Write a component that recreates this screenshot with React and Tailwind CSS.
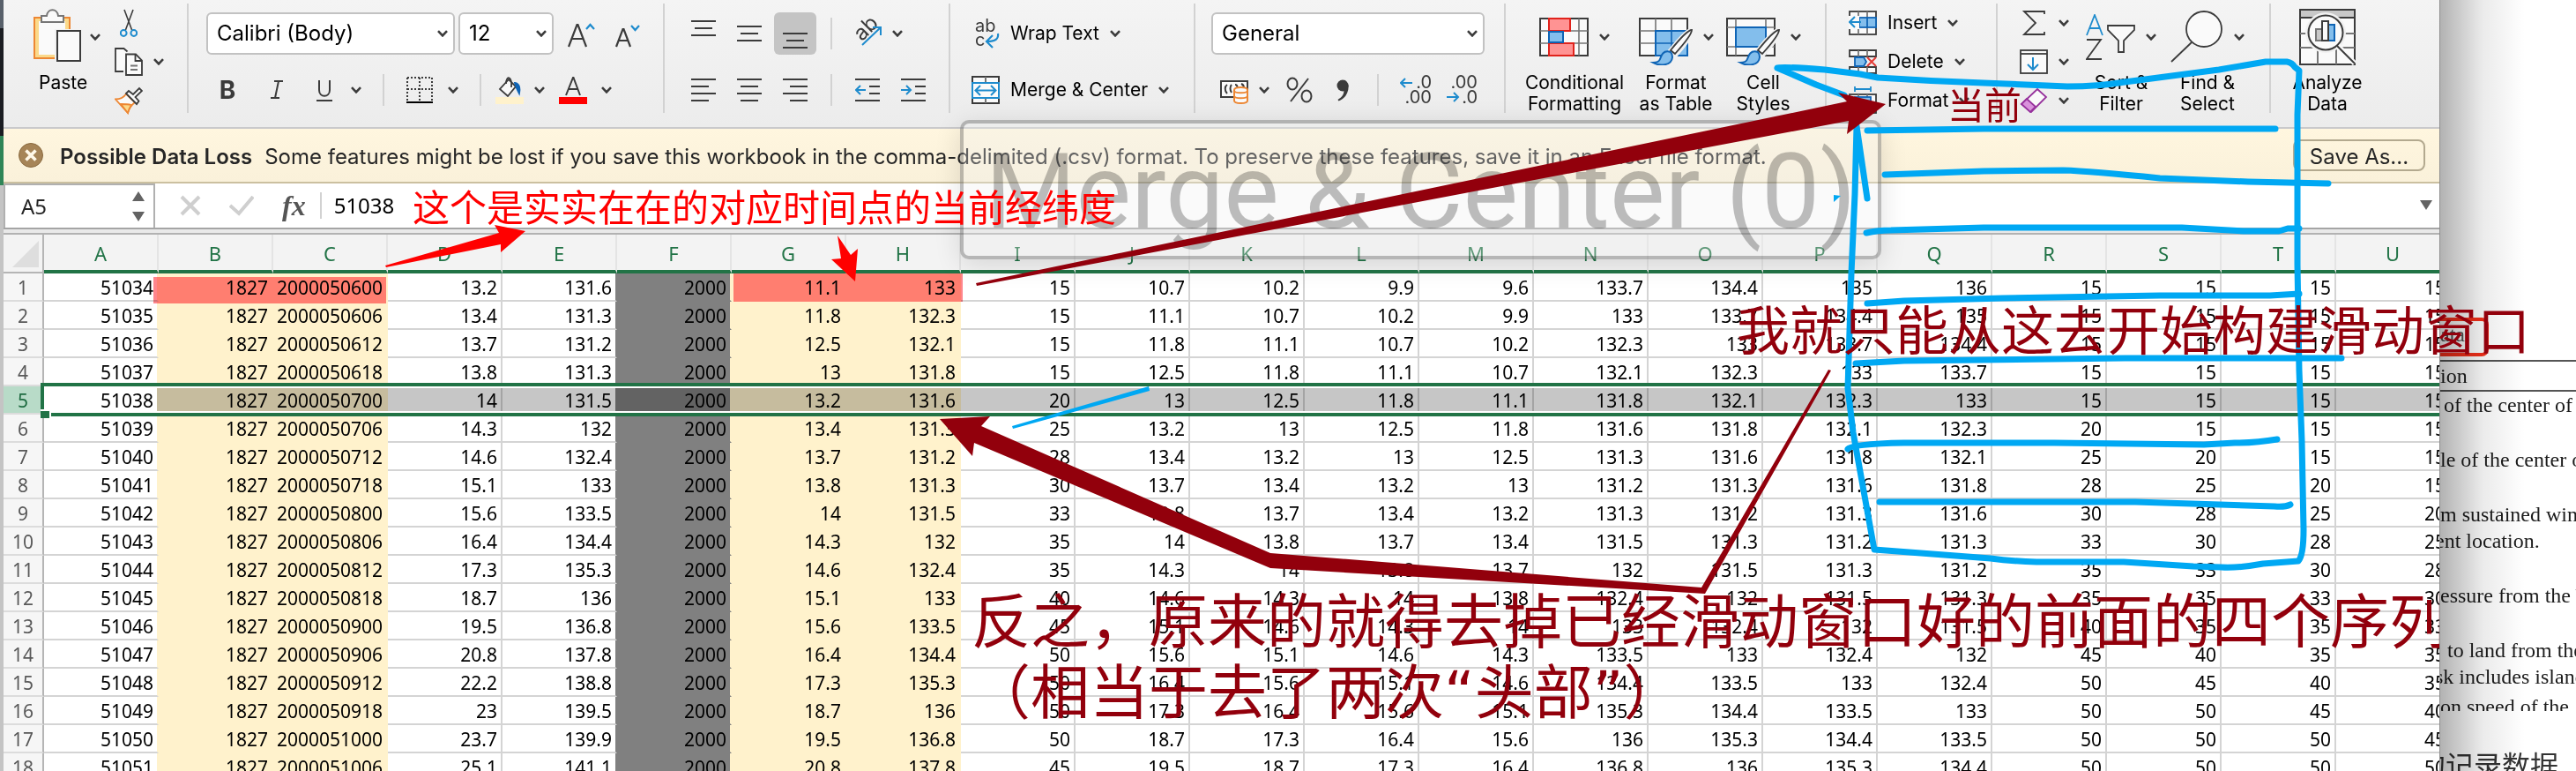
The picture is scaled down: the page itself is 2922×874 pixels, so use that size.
import React from "react";

/* ---------- sheet data ---------- */
const COLUMNS = "ABCDEFGHIJKLMNOPQRSTU".split("");
const LAT = [9.6, 9.9, 10.2, 10.7, 11.1, 11.8, 12.5, 13, 13.2, 13.4, 13.7, 13.8, 14, 14.3, 14.6, 15.1, 15.6, 16.4, 17.3, 18.7, 19.5, 20.8, 22.2, 23, 23.7, 25.1];
const LON = [136, 135, 134.4, 133.7, 133, 132.3, 132.1, 131.8, 131.6, 131.3, 131.2, 131.3, 131.5, 132, 132.4, 133, 133.5, 134.4, 135.3, 136, 136.8, 137.8, 138.8, 139.5, 139.9, 141.1];
const WIND = [15, 15, 15, 15, 15, 15, 15, 15, 20, 25, 28, 30, 33, 35, 35, 40, 45, 50, 50, 50, 50, 45];
const two = (n) => String(n).padStart(2, "0");

const ROWS = Array.from({ length: 18 }, (_, i) => {
  const hours = i * 6;
  return [
    51034 + i, 1827, `200005${two(6 + Math.floor(hours / 24))}${two(hours % 24)}`,
    LAT[i + 8], LON[i + 8], 2000, LAT[i + 4], LON[i + 4], WIND[i + 4],
    LAT[i + 3], LAT[i + 2], LAT[i + 1], LAT[i],
    LON[i + 3], LON[i + 2], LON[i + 1], LON[i],
    WIND[i + 3], WIND[i + 2], WIND[i + 1], WIND[i],
  ];
});

const plain = "border-[#d4d4d4]";
const CELL = {
  A: "border-b-[#d4d4d4] border-r-[#fff2cc]",
  B: "bg-[#fff2cc] border-[#fff2cc]",
  C: "bg-[#fff2cc] border-[#fff2cc]",
  E: "border-b-[#d4d4d4] border-r-[#808080]",
  F: "bg-[#808080] border-b-[#808080] border-r-[#fff2cc]",
  G: "bg-[#fff2cc] border-[#fff2cc]",
  H: "bg-[#fff2cc] border-[#fff2cc]",
};

/* ---------- small parts ---------- */
const Chevron = ({ className = "" }) => (
  <svg className={`h-2 w-3 shrink-0 ${className}`} viewBox="0 0 12 8" fill="none" stroke="#3b3b3b" strokeWidth="2.6">
    <path d="M1 1.2 6 6.4 11 1.2" />
  </svg>
);
const Sep = ({ className = "h-9" }) => <div className={`w-[2px] shrink-0 bg-[#d2d2d2] ${className}`} />;
const GroupSep = () => <Sep className="mt-1 h-[124px]" />;

const IconButton = ({ label, className = "", children }) => (
  <button aria-label={label} className={`flex shrink-0 items-center justify-center ${className}`}>{children}</button>
);

const lineSets = {
  top: ["M0 7h28", "M4 15h20", "M0 23h28"],
  middle: ["M0 13h28", "M4 21h20", "M0 29h28"],
  bottom: ["M0 21h28", "M4 29h20", "M0 37h28"],
  left: ["M0 9h28", "M0 17h20", "M0 25h28", "M0 33h20"],
  center: ["M0 9h28", "M4 17h20", "M0 25h28", "M4 33h20"],
  right: ["M0 9h28", "M8 17h20", "M0 25h28", "M8 33h20"],
};
const Lines = ({ kind }) => (
  <svg className="h-[42px] w-7" viewBox="0 0 28 42" stroke="#3b3b3b" strokeWidth="2">
    {lineSets[kind].map((d) => <path key={d} d={d} />)}
  </svg>
);
const Indent = ({ out }) => (
  <svg className="h-[42px] w-7" viewBox="0 0 28 42" fill="none" stroke="#3b3b3b" strokeWidth="2">
    <path d="M0 9h28M16 17h12M16 25h12M0 33h28" />
    <path d={out ? "M12 21H1M6 16 1 21 6 26" : "M0 21h11M6 16 11 21 6 26"} stroke="#1e8bcd" />
  </svg>
);

const PasteIcon = () => (
  <svg className="h-16 w-14" viewBox="0 0 56 64" fill="none" strokeWidth="2">
    <rect x="1" y="10" width="40" height="46" fill="#fbd98a" stroke="#ed8733" />
    <rect x="6" y="14" width="30" height="38" fill="#fafafa" />
    <path d="M9 15V8h6c1-9 12-9 13 0h6v7z" fill="#fafafa" stroke="#767676" />
    <rect x="24" y="23" width="31" height="39" fill="#f1f1f1" />
    <rect x="27" y="25" width="26" height="34" fill="#fafafa" stroke="#3b3b3b" />
  </svg>
);
const CutIcon = () => (
  <svg className="h-8 w-5" viewBox="0 0 20 32" fill="none" stroke="#3b3b3b" strokeWidth="1.6">
    <path d="M5 1 13.6 24M15 1 6.4 24" />
    <circle cx="4.2" cy="27.5" r="3.4" stroke="#1e8bcd" strokeWidth="2" />
    <circle cx="15.8" cy="27.5" r="3.4" stroke="#1e8bcd" strokeWidth="2" />
  </svg>
);
const CopyIcon = () => (
  <svg className="h-8 w-8" viewBox="0 0 32 32" fill="none" stroke="#3b3b3b" strokeWidth="1.8">
    <path d="M10 27H1V1h9.500l4 3.500" fill="#fafafa" />
    <path d="M13 7.500h11l7 7V31H13z" fill="#fafafa" />
    <path d="M23.500 7.500V15H31" />
    <path d="M18 20.500h8M18 25h8" stroke="#767676" />
  </svg>
);
const BrushIcon = () => (
  <svg className="h-8 w-8" viewBox="0 0 32 32" fill="none" strokeWidth="1.8">
    <path d="M1 14.500c5 0 9-1.500 12-6L23 18c-4 3-6.500 7-8 12z" fill="#fafafa" stroke="#ed8733" />
    <path d="M7 20c5 0 8 0 12 1-2 3-3 5-4 9z" fill="#fbd98a" stroke="#ed8733" />
    <path d="m13 8 3-3 5 4 7-7 3 3-7.500 7 4 4.500L25 20z" fill="#fafafa" stroke="#3b3b3b" />
  </svg>
);

const GridBase = () => (
  <>
    <rect x="1" y="1" width="54" height="42" fill="#fafafa" stroke="#3b3b3b" strokeWidth="2" />
    <path d="M1 15h54M1 29h54M19 1v42M37 1v42" stroke="#767676" strokeWidth="1.6" />
  </>
);
const PaintBrush = () => (
  <>
    <path d="M60 14C55 14 44 27 36 37l5 6C50 33 60 20 60 14z" fill="#fafafa" stroke="#f1f1f1" strokeWidth="5" />
    <path d="M60 14C55 14 44 27 36 37l5 4C50 31 60 19 60 14z" fill="#fafafa" stroke="#3b3b3b" strokeWidth="1.800" />
    <path d="M36 39c-9-3-11 5-12 8-1 3-4 4-8 4 7 4 21 4 22-6 0-3-1-5-2-6z" fill="#83beec" stroke="#0f64b5" strokeWidth="2" />
  </>
);
const ConditionalIcon = () => (
  <svg className="h-16 w-14" viewBox="0 -10 56 64" fill="none">
    <rect x="1" y="1" width="54" height="42" fill="#fafafa" stroke="#3b3b3b" strokeWidth="2" />
    <path d="M1 15h54M1 29h54M11 1v42M45 1v42" stroke="#767676" strokeWidth="1.6" />
    <path d="M11 1h24v14H11zM11 29h28v14H11z" fill="#ff9393" stroke="#e0231c" strokeWidth="2" />
    <path d="M11 16h16v12H11z" fill="#83beec" stroke="#0f64b5" strokeWidth="2" />
  </svg>
);
const FormatTableIcon = () => (
  <svg className="h-16 w-[62px]" viewBox="-1 -10 62 64" fill="none">
    <GridBase />
    <path d="M19 15h36v28H19z" fill="#83beec" stroke="#0f64b5" strokeWidth="2" />
    <path d="M37 15v28M19 29h36" stroke="#0f64b5" strokeWidth="1.6" />
    <PaintBrush />
  </svg>
);
const CellStylesIcon = () => (
  <svg className="h-16 w-[62px]" viewBox="-1 -10 62 64" fill="none">
    <rect x="1" y="1" width="54" height="42" fill="#fafafa" stroke="#3b3b3b" strokeWidth="2" />
    <path d="M1 11h54M1 33h54M11 1v42M45 1v42" stroke="#767676" strokeWidth="1.6" />
    <path d="M11 11h34v22H11z" fill="#83beec" stroke="#0f64b5" strokeWidth="2" />
    <PaintBrush />
  </svg>
);
const InsertIcon = () => (
  <svg className="h-7 w-8" viewBox="0 0 32 28" fill="none" strokeWidth="1.8">
    <rect x="1" y="1" width="30" height="26" fill="#fafafa" stroke="#3b3b3b" />
    <path d="M11 1v26M21 1v26" stroke="#767676" />
    <rect x="12" y="8" width="19" height="11" fill="#83beec" stroke="#0f64b5" />
    <path d="M21 8v11" stroke="#0f64b5" />
    <path d="M0 6h12v15H0z" fill="#fafafa" />
    <path d="M14 13H1M7 7 1 13l6 6" stroke="#1e8bcd" strokeWidth="2" />
  </svg>
);
const DeleteIcon = () => (
  <svg className="h-7 w-8" viewBox="0 0 32 28" fill="none" strokeWidth="1.8">
    <path d="M1 8V1h30v7zM1 20v7h30v-7z" fill="#fafafa" stroke="#3b3b3b" />
    <path d="M11 1v7M21 1v7M11 20v7M21 20v7" stroke="#767676" />
    <path d="M7 9h10l3 5-3 5H7z" fill="#83beec" stroke="#0f64b5" />
    <path d="m21 9 10 10M31 9 21 19" stroke="#e33b36" strokeWidth="2" />
  </svg>
);
const FormatIcon = () => (
  <svg className="h-8 w-8" viewBox="0 0 32 32" fill="none" strokeWidth="1.8">
    <path d="M7 3h18M7 0v6M25 0v6" stroke="#1e8bcd" />
    <rect x="1" y="9" width="30" height="21" fill="#fafafa" stroke="#3b3b3b" />
    <path d="M1 23h30M11 9v21M21 9v21" stroke="#767676" />
    <rect x="7" y="12" width="18" height="10" fill="#83beec" stroke="#0f64b5" />
  </svg>
);
const SigmaIcon = () => (
  <svg className="h-7 w-8" viewBox="0 0 32 28" fill="none" stroke="#3b3b3b" strokeWidth="1.8">
    <path d="M28 4V1H5l13 13L5 27h23v-3" />
  </svg>
);
const FillDownIcon = () => (
  <svg className="h-7 w-8" viewBox="0 0 32 28" fill="none" strokeWidth="1.8">
    <rect x="1" y="1" width="30" height="26" fill="#fafafa" stroke="#3b3b3b" />
    <path d="M1 5h30" stroke="#3b3b3b" />
    <path d="M15 9v14M9 17l6 6 6-6" stroke="#1e8bcd" strokeWidth="2" />
  </svg>
);
const EraserIcon = () => (
  <svg className="h-7 w-8" viewBox="0 0 32 28" fill="none" stroke="#96319c" strokeWidth="1.8">
    <path d="M20 1 30 10 13 27 2 18z" fill="#fafafa" />
    <path d="M8 12 2 18l10 9 6-6z" fill="#d992dc" />
  </svg>
);
const FunnelIcon = () => (
  <svg className="h-[52px] w-14" viewBox="0 0 56 52" fill="none" strokeWidth="1.8">
    <path d="m1 24 9-23 9 23M4 16h12" stroke="#1e8bcd" />
    <path d="M1 29h16L1 51h17" stroke="#3b3b3b" />
    <path d="M25 13h30v5L43 30v13h-6V30L25 18z" fill="#fafafa" stroke="#3b3b3b" />
  </svg>
);
const FindIcon = () => (
  <svg className="h-[60px] w-[60px]" viewBox="0 0 60 60" fill="none" stroke="#3b3b3b" strokeWidth="1.8">
    <circle cx="38" cy="21" r="20" fill="#fafafa" />
    <path d="M24 36 1 58" />
  </svg>
);
const AnalyzeIcon = () => (
  <svg className="h-16 w-16" viewBox="0 0 64 64" fill="none" strokeWidth="2">
    <rect x="1" y="1" width="62" height="62" fill="#fafafa" stroke="#3b3b3b" />
    <path d="M2 2h60v8H2z" fill="#c8c8c8" />
    <path d="M1 10h62" stroke="#3b3b3b" />
    <path d="M1 28h62M1 44h62M21 44v19M42 44v19" stroke="#767676" />
    <circle cx="30" cy="27" r="23" fill="#f1f1f1" />
    <circle cx="30" cy="27" r="19.500" fill="#fafafa" stroke="#3b3b3b" />
    <path d="M19 23h7v13h-7z" fill="#c8c8c8" stroke="#767676" />
    <path d="M33 18h7v18h-7z" fill="#83beec" stroke="#0f64b5" />
    <path d="M26 14h7v22h-7z" fill="#fafafa" stroke="#3b3b3b" />
    <path d="m44 42 19 20" stroke="#fafafa" strokeWidth="6" />
    <path d="m43 42 20 20" stroke="#3b3b3b" />
  </svg>
);

const BigButton = ({ icon, lines, chevron = true, className = "" }) => (
  <button className={`flex shrink-0 flex-col items-center ${className}`}>
    <span className="flex h-16 items-center justify-center gap-3">
      {icon}
      {chevron && <Chevron />}
    </span>
    <span className="mt-2 text-[21px] leading-6 text-black">
      {lines.map((l) => <span key={l} className="block whitespace-nowrap">{l}</span>)}
    </span>
  </button>
);

const SmallButton = ({ icon, label, className = "" }) => (
  <button aria-label={label} className={`flex h-8 items-center gap-3 whitespace-nowrap text-[21px] leading-8 text-black ${className}`}>
    {icon}
    {label}
    <Chevron />
  </button>
);

const Select = ({ label, value, className }) => (
  <div className={`relative h-12 shrink-0 ${className}`}>
    <select aria-label={label} defaultValue={value} className="h-full w-full appearance-none rounded-md border-2 border-[#c2c2c2] bg-white pr-7 pl-2.5 text-2xl text-black">
      <option>{value}</option>
    </select>
    <Chevron className="pointer-events-none absolute top-5 right-2" />
  </div>
);

/* ---------- ribbon ---------- */
const Ribbon = () => (
  <div role="toolbar" aria-label="Home" className="flex h-[146px] shrink-0 overflow-hidden border-b-2 border-[#c9c9cb] bg-linear-to-b from-[#f4f4f4] to-[#ececec]">
    <div className="flex w-[208px] shrink-0 gap-3 pt-2.5 pl-[34px]">
      <button className="flex w-20 flex-col items-start">
        <span className="flex items-center gap-2"><PasteIcon /><Chevron /></span>
        <span className="mt-2 pl-1.5 text-[21px] leading-6">Paste</span>
      </button>
      <div className="flex flex-col items-start gap-3">
        <IconButton label="Cut" className="pl-1.5"><CutIcon /></IconButton>
        <IconButton label="Copy" className="gap-3"><CopyIcon /><Chevron /></IconButton>
        <IconButton label="Format Painter"><BrushIcon /></IconButton>
      </div>
    </div>
    <GroupSep />

    <div className="flex w-[538px] shrink-0 flex-col gap-[22px] pt-3.5 pl-5">
      <div className="flex items-center gap-1">
        <Select label="Font" value="Calibri (Body)" className="w-[282px]" />
        <Select label="Font size" value="12" className="w-[108px]" />
        <IconButton label="Increase font size" className="ml-1 w-12">
          <svg className="h-8 w-8" viewBox="0 0 32 32" fill="none" stroke="#3b3b3b" strokeWidth="2.200">
            <path d="M1 31 10.500 6h1L21 31M4.500 22h13" /><path d="m21 11 4.500-5 4.500 5" stroke="#1e8bcd" />
          </svg>
        </IconButton>
        <IconButton label="Decrease font size" className="w-12">
          <svg className="h-8 w-8" viewBox="0 0 32 32" fill="none" stroke="#3b3b3b" strokeWidth="2.200">
            <path d="m3 31 7.500-20h1L19 31M5 24h12" /><path d="m20 7 4.500 5L29 7" stroke="#1e8bcd" />
          </svg>
        </IconButton>
      </div>
      <div className="flex h-9 items-center text-[#3b3b3b]">
        <IconButton label="Bold" className="w-12 text-[28px] font-bold">B</IconButton>
        <IconButton label="Italic" className="ml-2 w-12">
          <svg className="h-6 w-4" viewBox="0 0 16 24" fill="none" stroke="#3b3b3b" strokeWidth="2"><path d="M5 2h10M1 21h10M10 2 6 21" /></svg>
        </IconButton>
        <IconButton label="Underline" className="ml-2 gap-5">
          <svg className="ml-3 h-7 w-5" viewBox="0 0 20 28" fill="none" stroke="#3b3b3b" strokeWidth="2"><path d="M4 3v11c0 9 12 9 12 0V3M1 26h18" /></svg>
          <Chevron />
        </IconButton>
        <Sep className="ml-6 h-9" />
        <IconButton label="Borders" className="ml-6 gap-4">
          <svg className="h-8 w-8" viewBox="0 0 32 32" fill="none" stroke="#3b3b3b" strokeWidth="2">
            <path d="M2 2h28M2 15h28M2 2v26M16 2v26M30 2v26" strokeDasharray="2 2" /><path d="M1 30h30" stroke="#000" />
          </svg>
          <Chevron />
        </IconButton>
        <Sep className="ml-6 h-9" />
        <IconButton label="Fill color" className="ml-4 gap-3">
          <svg className="h-8 w-8" viewBox="0 0 32 32" fill="none" stroke="#3b3b3b" strokeWidth="1.8">
            <path d="m15 4-10 11 9 8 9-11z" fill="#fafafa" /><path d="M12 9c0-10 7-9 6 4" />
            <path d="M22 8c6 1 6 7 5 12-2-4-3-5-5-12z" fill="#0f64b5" stroke="#0f64b5" /><path d="M0 24h32v8H0z" fill="#fff2cc" stroke="none" />
          </svg>
          <Chevron />
        </IconButton>
        <IconButton label="Font color" className="ml-4 gap-4">
          <svg className="h-8 w-8" viewBox="0 0 32 32" fill="none" stroke="#3b3b3b" strokeWidth="2">
            <path d="m8 22 8-20h.5L24 22M11 15h10.500" /><path d="M0 24h32v8H0z" fill="#f00" stroke="none" />
          </svg>
          <Chevron />
        </IconButton>
      </div>
    </div>
    <GroupSep />

    <div className="flex w-[322px] shrink-0 flex-col gap-[22px] pt-3.5 pl-5">
      <div className="flex items-center gap-1">
        <IconButton label="Top align" className="h-12 w-12"><Lines kind="top" /></IconButton>
        <IconButton label="Middle align" className="h-12 w-12"><Lines kind="middle" /></IconButton>
        <IconButton label="Bottom align" className="h-12 w-12 rounded-md bg-[#c4c4c4]"><Lines kind="bottom" /></IconButton>
        <Sep className="ml-3 h-9" />
        <IconButton label="Orientation" className="ml-5 gap-3">
          <span className="relative block h-9 w-8 text-[#3b3b3b]">
            <span className="absolute -top-1 left-0 -rotate-45 text-2xl leading-8">ab</span>
            <svg className="absolute inset-0 h-9 w-8" viewBox="0 0 32 36" fill="none" stroke="#1e8bcd" strokeWidth="2"><path d="M10 31 31 11M22 11h9v9" /></svg>
          </span>
          <Chevron />
        </IconButton>
      </div>
      <div className="flex h-9 items-center gap-1">
        <IconButton label="Align left" className="w-12"><Lines kind="left" /></IconButton>
        <IconButton label="Center" className="w-12"><Lines kind="center" /></IconButton>
        <IconButton label="Align right" className="w-12"><Lines kind="right" /></IconButton>
        <Sep className="ml-3 h-9" />
        <IconButton label="Decrease indent" className="ml-3 w-12"><Indent out /></IconButton>
        <IconButton label="Increase indent" className="w-12"><Indent /></IconButton>
      </div>
    </div>
    <GroupSep />

    <div className="flex w-[276px] shrink-0 flex-col gap-8 pt-[22px] pl-6">
      <SmallButton label="Wrap Text" icon={
        <span className="relative block h-9 w-8 text-xl leading-[18px] text-[#3b3b3b]">
          <span className="absolute top-0 left-1">ab</span>
          <span className="absolute top-4 left-1">c</span>
          <svg className="absolute inset-0 h-9 w-8" viewBox="0 0 32 36" fill="none" stroke="#1e8bcd" strokeWidth="2.200"><path d="M30 18c1 6-3 9-12 9M24 20l-7 7 7 7" /></svg>
        </span>
      } />
      <SmallButton label="Merge & Center" icon={
        <svg className="h-8 w-8" viewBox="0 0 32 32" fill="none" strokeWidth="2">
          <rect x="1" y="1" width="30" height="30" fill="#fafafa" stroke="#3b3b3b" /><path d="M16 1v30" stroke="#767676" />
          <rect x="1" y="8" width="30" height="17" fill="#fafafa" stroke="#1e8bcd" /><path d="M5 16.500h22M10 11l-5.500 5.500L10 22M22 11l5.500 5.500L22 22" stroke="#1e8bcd" />
        </svg>
      } />
    </div>
    <GroupSep />

    <div className="flex w-[350px] shrink-0 flex-col gap-[22px] pt-3.5 pl-[18px]">
      <Select label="Number format" value="General" className="w-[310px]" />
      <div className="flex h-9 items-center">
        <IconButton label="Accounting format" className="ml-2.5 gap-3">
          <svg className="h-8 w-8" viewBox="0 0 32 32" fill="none" strokeWidth="2">
            <path d="M1 6h30v18H1z" fill="#fafafa" stroke="#3b3b3b" /><path d="M8 10c-3 2-3 7 0 10M13 10c-2 2-2 6 0 9M17 10c3 0 3 4 2 6M24 9c3 1 3 3 3 5" stroke="#3b3b3b" />
            <path d="M16 16c0-4 15-4 15 0v12c0 4-15 4-15 0z" fill="#fafafa" stroke="#ed8733" /><path d="M16 17c1 3 14 3 15 0M16 23c1 3 14 3 15 0" stroke="#ed8733" />
          </svg>
          <Chevron />
        </IconButton>
        <IconButton label="Percent" className="ml-[18px]">
          <svg className="h-8 w-8" viewBox="0 0 32 32" fill="none" stroke="#3b3b3b" strokeWidth="2"><path d="M26 3 6 29" /><ellipse cx="8" cy="9" rx="5.500" ry="6.500" /><ellipse cx="24" cy="23" rx="5.500" ry="6.500" /></svg>
        </IconButton>
        <IconButton label="Comma style" className="ml-6">
          <svg className="h-7 w-5" viewBox="0 0 20 28" fill="#3b3b3b"><circle cx="9" cy="9" r="6.500" /><path d="M15.500 8c1 9-4 16-11 18.500l-1-1.500c5-3 7-6 7-11z" /></svg>
        </IconButton>
        <Sep className="ml-7 h-9" />
        <button aria-label="Increase decimal" className="relative ml-6 h-9 w-9 text-right text-xl leading-[17px] text-[#3b3b3b]">
          <span className="block">.0</span><span className="block">.00</span>
          <svg className="absolute top-1 left-0 h-3 w-4" viewBox="0 0 16 12" fill="none" stroke="#1e8bcd" strokeWidth="2"><path d="M14 6H1M6 1 1 6l5 5" /></svg>
        </button>
        <button aria-label="Decrease decimal" className="relative ml-4 h-9 w-9 text-right text-xl leading-[17px] text-[#3b3b3b]">
          <span className="block">.00</span><span className="block">.0</span>
          <svg className="absolute bottom-1 left-0 h-3 w-4" viewBox="0 0 16 12" fill="none" stroke="#1e8bcd" strokeWidth="2"><path d="M1 6h13M9 1l5 5-5 5" /></svg>
        </button>
      </div>
    </div>
    <GroupSep />

    <div className="flex w-[362px] shrink-0 gap-3 pt-2.5 pl-[18px]">
      <BigButton className="w-[120px]" icon={<ConditionalIcon />} lines={["Conditional", "Formatting"]} />
      <BigButton className="w-[86px]" icon={<FormatTableIcon />} lines={["Format", "as Table"]} />
      <BigButton className="w-[88px]" icon={<CellStylesIcon />} lines={["Cell", "Styles"]} />
    </div>
    <GroupSep />

    <div className="flex w-[192px] shrink-0 flex-col gap-3 pt-2.5 pl-[25px]">
      <SmallButton icon={<InsertIcon />} label="Insert" />
      <SmallButton icon={<DeleteIcon />} label="Delete" />
      <SmallButton icon={<FormatIcon />} label="Format" />
    </div>
    <GroupSep />

    <div className="flex w-[308px] shrink-0 pt-2.5 pl-[25px]">
      <div className="flex flex-col gap-3">
        <IconButton label="AutoSum" className="h-8 gap-3"><SigmaIcon /><Chevron /></IconButton>
        <IconButton label="Fill" className="h-8 gap-3"><FillDownIcon /><Chevron /></IconButton>
        <IconButton label="Clear" className="h-8 gap-3"><EraserIcon /><Chevron /></IconButton>
      </div>
      <BigButton className="ml-4 w-[86px]" icon={<FunnelIcon />} lines={["Sort &", "Filter"]} />
      <BigButton className="ml-3 w-[86px]" icon={<FindIcon />} lines={["Find &", "Select"]} />
    </div>
    <GroupSep />

    <div className="flex grow pt-2.5 pl-6">
      <BigButton className="w-20" chevron={false} icon={<AnalyzeIcon />} lines={["Analyze", "Data"]} />
    </div>
  </div>
);

const WarningBar = () => (
  <div className="flex h-[62px] shrink-0 items-center overflow-hidden border-b-2 border-[#cbc0a0] bg-linear-to-b from-[#fff6df] to-[#faf1da] pr-4 pl-4 text-2xl whitespace-nowrap text-[#262626]">
    <button aria-label="Dismiss">
      <svg className="h-8 w-8" viewBox="0 0 32 32" fill="none">
        <circle cx="15" cy="16" r="13.500" fill="#a68457" stroke="#8a6a40" /><path d="m9.500 10.500 11 11M20.500 10.500l-11 11" stroke="#fff8e8" strokeWidth="3.600" />
      </svg>
    </button>
    <strong className="ml-4 pt-1 font-semibold">Possible Data Loss</strong>
    <span className="ml-3.5 grow pt-1">Some features might be lost if you save this workbook in the comma-delimited (.csv) format. To preserve these features, save it in an Excel file format.</span>
    <button className="h-9 w-[150px] rounded-lg border-2 border-[#b3a98f] pt-0.5">Save As...</button>
  </div>
);

const FormulaBar = () => (
  <div className="flex h-[58px] shrink-0 flex-col bg-[#e9e9e9]">
    <div className="flex h-[52px] items-center border-b-2 border-[#a5a5a5] bg-white font-['Noto_Sans',sans-serif] text-2xl">
      <div className="flex h-full w-[172px] shrink-0 items-center border-t-2 border-r-2 border-l-2 border-[#b0b0b0] pr-2.5">
        <input aria-label="Name box" defaultValue="A5" className="w-0 grow bg-transparent pl-[18px] text-[#262626] outline-none" />
        <svg className="h-9 w-3.5" viewBox="0 0 14 36" fill="#636363"><path d="M0 12 7 1l7 11zM0 24h14L7 35z" /></svg>
      </div>
      <IconButton label="Cancel" className="ml-7"><svg className="h-6 w-6" viewBox="0 0 24 24" fill="none" stroke="#cfcfcf" strokeWidth="4"><path d="m2 2 20 20M22 2 2 22" /></svg></IconButton>
      <IconButton label="Enter" className="ml-8"><svg className="h-6 w-7" viewBox="0 0 28 24" fill="none" stroke="#cfcfcf" strokeWidth="4"><path d="m1 12 10 9L27 2" /></svg></IconButton>
      <IconButton label="Insert function" className="ml-8 font-['Liberation_Serif',serif] text-[32px] leading-8 font-bold text-[#555] italic">fx</IconButton>
      <Sep className="ml-4 h-[30px]" />
      <input aria-label="Formula" defaultValue="51038" className="ml-3.5 w-0 grow bg-transparent text-black outline-none" />
      <button aria-label="Expand formula bar" className="mr-2"><svg className="h-3 w-3.5" viewBox="0 0 14 12" fill="#636363"><path d="M0 0h14L7 11z" /></svg></button>
    </div>
    <div className="mt-1 h-[2px] bg-[#b2b2b2]" />
  </div>
);

/* ---------- sheet ---------- */
const Sheet = () => (
  <div className="relative min-h-0 grow overflow-hidden bg-white">
    <table className="w-[2776px] table-fixed border-separate border-spacing-0 font-['Noto_Sans',sans-serif] text-[21px] leading-7">
      <colgroup>
        <col className="w-[46px]" />
        {COLUMNS.map((c) => <col key={c} className="w-[130px]" />)}
      </colgroup>
      <thead>
        <tr className="h-11 bg-[#f3f3f3]">
          <th aria-label="Select all" className="border-r-2 border-b-2 border-[#b5b5b5] p-0">
            <svg className="ml-2.5 h-8 w-8" viewBox="0 0 32 32" fill="#dedede"><path d="M30 2v30H0z" /></svg>
          </th>
          {COLUMNS.map((c) => (
            <th key={c} scope="col" className="border-r-2 border-b-4 border-r-[#e4e4e4] border-b-[#217346] px-0 pt-0.5 pb-0 text-[22px] font-normal text-[#217346]">{c}</th>
          ))}
        </tr>
      </thead>
      <tbody>
        {ROWS.map((row, r) => (
          <tr key={row[0]} className="h-8">
            <th scope="row" className={`border-r-2 border-b-2 border-r-[#b5b5b5] border-b-[#dcdcdc] px-0 pt-0.5 pb-0 font-normal ${r === 4 ? "bg-[#b8dbc8] text-[#1e6b41]" : "bg-[#f6f6f6] text-[#595959]"}`}>{r + 1}</th>
            {row.map((v, c) => (
              <td key={c} className={`border-r-2 border-b-2 pt-0.5 pr-1 pb-0 pl-0 text-right text-black ${CELL[COLUMNS[c]] || plain}`}>{v}</td>
            ))}
          </tr>
        ))}
      </tbody>
    </table>
    {/* highlighted cells */}
    <div className="absolute top-12 left-[170px] h-[30px] w-[264px] bg-[#ff858c] mix-blend-multiply" />
    <div className="absolute top-11 left-[828px] h-8 w-[260px] bg-[#ff858c] mix-blend-multiply" />
    {/* selected row */}
    <div className="absolute top-[168px] right-0 left-[42px] h-[38px] border-t-4 border-b-4 border-l-4 border-[#217346]">
      <div className="h-full border-t-2 border-b-2 border-white" />
      <div className="absolute -bottom-1.5 -left-1 h-2.5 w-3 border-t-2 border-r-2 border-white bg-[#217346]" />
    </div>
    <div className="absolute top-[174px] right-0 left-[174px] h-[26px] bg-[#c6c6c6] mix-blend-multiply" />
  </div>
);

/* ---------- document behind the window ---------- */
const DocumentPane = () => (
  <div className="relative w-[154px] shrink-0 overflow-hidden bg-white font-['Liberation_Serif',serif] text-2xl leading-[30px] whitespace-nowrap text-[#1c1c1c]">
    <div className="flex h-[408px] items-end pb-1">
      <div className="h-11 w-[55px] rounded-r-lg border-4 border-l-0 border-[#f5301a] text-[#555]">ata.</div>
    </div>
    <div className="border-t-2 border-b-2 border-[#555] leading-8">ion</div>
    <p className="pl-1">of the center of the</p>
    <p className="pt-8">le of the center of</p>
    <p className="pt-8">m sustained wind</p>
    <p className="-ml-1.5">ent location.</p>
    <p className="pt-8">essure from the W</p>
    <p className="pt-8 pl-2">to land from the</p>
    <p className="-ml-1.5">sk includes island</p>
    <p className="mt-1 h-5 overflow-hidden">on speed of the</p>
    <p className="flex justify-end pt-10 pr-5 font-['Noto_Sans_CJK_SC',sans-serif] text-[32px] leading-10 text-[#333]">的记录数据</p>
    <div className="absolute inset-y-0 left-0 w-24 bg-linear-to-r from-black/30 via-black/8 to-transparent" />
  </div>
);

/* ---------- hand-drawn notes ---------- */
const Note = ({ className, children }) => (
  <p className={`absolute font-['Noto_Sans','Noto_Sans_CJK_SC',sans-serif] whitespace-nowrap ${className}`}>{children}</p>
);
const Strokes = () => (
  <svg className="absolute inset-0 h-full w-full" viewBox="0 0 2922 874" preserveAspectRatio="xMinYMin slice" fill="none">
    <g stroke="#00a8f3" strokeWidth="7" strokeLinecap="round" strokeLinejoin="round">
      <path d="M2092 108 2060 96 2016 77Q2020 75 2070 79L2110 84 2130 88Q2190 92 2250 94L2345 98Q2380 98 2410 93L2517 79 2570 70H2594Q2600 71 2603 76L2608 80 2606 130V300L2608 420 2611 500 2613 600Q2613 630 2607 636L2567 639Q2540 644 2520 643L2488 642 2409 637H2310Q2280 636 2258 633L2126 623 2102 490 2096 440 2100 310 2104 220 2106 143 2118 225" />
      <path d="M2118 148 2250 146H2581M2138 198 2250 194 2340 193Q2372 194 2450 202L2550 206 2641 208M2117 264Q2130 261 2145 261L2250 258H2475L2545 262 2585 262 2595 259H2608" />
      <path d="M2118 344 2160 341 2272 338 2450 335H2575L2608 333M2105 412 2160 409 2410 406H2656M2096 509Q2100 503 2160 502H2330L2500 504 2535 502Q2560 502 2583 498M2132 569H2422L2580 574Q2592 575 2598 572" />
    </g>
    <path d="M1148 483 1303 438 1304 443 1149 486zM2080 221l8 1-8 7z" fill="#00a8f3" />
    <path d="M1107 321 2095 115 2085 105 2139 118 2095 152 2097 137 1730 206 1108 324z" fill="#92000c" />
    <path d="M2074 419 1930 666 1441 627 1113 483 1123 472 1066 475 1103 517 1105 502 1441 644 1934 673 2077 420z" fill="#92000c" />
    <path d="M437 301 566 264 561 255 596 262 568 286V277L438 303zM950 267 965 289 973 282 970 319 943 294 954 293z" fill="#f00" />
  </svg>
);

export default function App() {
  return (
    <div className="relative flex h-screen overflow-hidden bg-[#c4c4c4] font-[Inter,sans-serif]">
      <div className="flex w-1 shrink-0 flex-col">
        <div className="h-8 bg-[#58606a]" />
        <div className="h-[122px] bg-[#1b1d22]" />
        <div className="h-14 bg-[#2f8557]" />
      </div>
      <main className="relative flex min-w-0 flex-1 flex-col border-r border-[#8e8e8e]">
        <Ribbon />
        <WarningBar />
        <FormulaBar />
        <Sheet />
        <div role="tooltip" className="absolute top-[136px] left-[1085px] h-[158px] w-[1045px] rounded-[10px] border-4 border-black/25 bg-[#f0f0f0]/30 text-center font-[Roboto,sans-serif] text-[118px] leading-[156px] whitespace-nowrap text-black/25 shadow-[0_6px_30px_rgba(0,0,0,0.12)]">Merge &amp; Center (0)</div>
        <Note className="top-[663px] left-[1098px] right-0 overflow-hidden text-[67px] leading-20 text-[#92000c]">
          反之，原来的就得去掉已经滑动窗口好的前面的四个序列
          <br />
          （相当于去了两次<span className="font-['DejaVu_Sans',sans-serif]">“</span>头部<span className="font-['DejaVu_Sans',sans-serif]">”</span>）
        </Note>
      </main>
      <DocumentPane />
      <Strokes />
      <Note className="top-[210px] left-[468px] text-[42px] leading-[50px] text-[#f00]">这个是实实在在的对应时间点的当前经纬度</Note>
      <Note className="top-[94px] left-[2209px] text-[42px] leading-[50px] text-[#92000c]">当前</Note>
      <Note className="top-[338px] left-[1970px] text-[60px] leading-[72px] text-[#92000c]">我就只能从这去开始构建滑动窗口</Note>
    </div>
  );
}
